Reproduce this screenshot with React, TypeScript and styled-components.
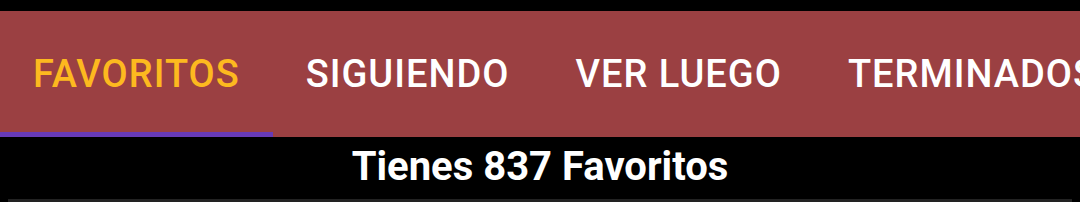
import React, { useState } from "react";
import styled, { createGlobalStyle } from "styled-components";

const GlobalStyle = createGlobalStyle`
  html, body {
    margin: 0;
    padding: 0;
    background: #000;
  }
  body {
    font-family: Roboto, "Noto Sans", Arial, sans-serif;
    overflow: hidden;
  }
`;

const TABS = ["FAVORITOS", "SIGUIENDO", "VER LUEGO", "TERMINADOS"];

const Root = styled.div`
  width: 1080px;
  height: 202px;
  display: flex;
  flex-direction: column;
  background: #000;
  padding-top: 11px;
  box-sizing: border-box;
`;

const TabBar = styled.div`
  display: flex;
  height: 126px;
  background: #9b4042;
  overflow: hidden;
  flex-shrink: 0;
`;

const Tab = styled.div<{ $active: boolean }>`
  position: relative;
  display: flex;
  align-items: center;
  padding: 0 33px;
  flex-shrink: 0;
  font-size: 38px;
  font-weight: 500;
  letter-spacing: 1px;
  color: ${p => (p.$active ? "#fdb91f" : "#ffffff")};
  white-space: nowrap;

  &::after {
    content: "";
    position: absolute;
    left: 0;
    right: 0;
    bottom: 0;
    height: 5px;
    background: ${p => (p.$active ? "#673ab7" : "transparent")};
  }
`;

const Summary = styled.div`
  flex: 1;
  display: flex;
  justify-content: center;
  align-items: center;
  color: #fff;
  font-size: 40px;
  font-weight: 700;
  padding-bottom: 3px;
`;

const Divider = styled.div`
  height: 3px;
  margin: 0 8px;
  background: #222;
  flex-shrink: 0;
`;

export default function App() {
  const [active, setActive] = useState(0);

  return (
    <>
      <GlobalStyle />
      <Root>
        <TabBar>
          {TABS.map((t, i) => (
            <Tab key={t} $active={i === active} onClick={() => setActive(i)}>
              {t}
            </Tab>
          ))}
        </TabBar>
        <Summary>Tienes 837 Favoritos</Summary>
        <Divider />
      </Root>
    </>
  );
}
